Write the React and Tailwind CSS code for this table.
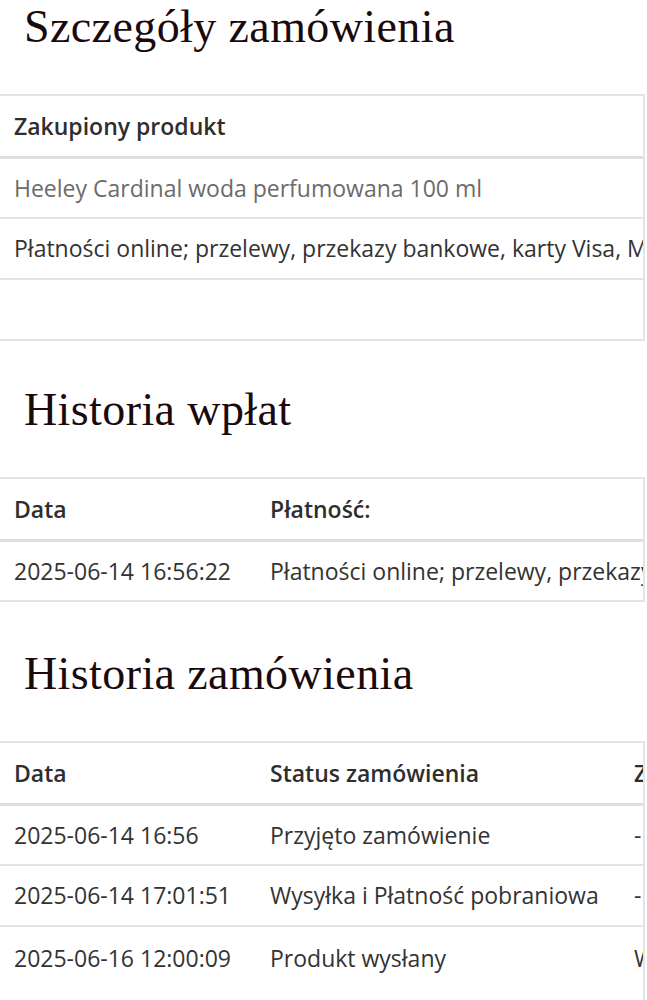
import React from 'react';

const serif = { fontFamily: '"Liberation Serif", "DejaVu Serif", serif' };

const Heading = ({ children, className = '' }) => (
  <h2
    className={`pl-[24px] text-[46px] leading-none text-[#1b0a0c] tracking-[0.4px] ${className}`}
    style={serif}
  >
    {children}
  </h2>
);

const Table = ({ head, rows, cols, width, lastTall = false }) => (
  <div className="w-[645px] overflow-hidden border-t-2 border-r-2 border-[#e4e4e4]">
    <table className="table-fixed border-collapse whitespace-nowrap" style={{ width }}>
      <colgroup>
        {cols.map((w, i) => (
          <col key={i} style={{ width: w }} />
        ))}
      </colgroup>
      <thead>
        <tr className="h-[61px] border-b-[3px] border-[#dedede]">
          {head.map((h, i) => (
            <th key={i} className="px-[14px] text-left align-middle font-semibold text-[#2e2e2e]">
              {h}
            </th>
          ))}
        </tr>
      </thead>
      <tbody>
        {rows.map((r, ri) => {
          const last = ri === rows.length - 1;
          return (
            <tr
              key={ri}
              className={
                last && lastTall
                  ? 'h-[90px]'
                  : 'h-[61px] border-b-2 border-[#e4e4e4]'
              }
            >
              {r.map((c, ci) => (
                <td
                  key={ci}
                  className={`overflow-hidden px-[14px] text-left ${last && lastTall ? 'align-top pt-[14px]' : 'align-middle'} ${
                    c.muted ? 'text-[#6b6b6b]' : 'text-[#333]'
                  }`}
                >
                  {c.text ?? c}
                </td>
              ))}
            </tr>
          );
        })}
      </tbody>
    </table>
  </div>
);

export default function App() {
  return (
    <div
      className="w-[647px] bg-white text-[23px] pb-10"
      style={{ fontFamily: '"Open Sans", "Noto Sans", sans-serif' }}
    >
      <Heading className="pt-[4px]">Szczegóły zamówienia</Heading>
      <div className="mt-[44px]">
        <Table
          cols={['900px']}
          width="900px"
          head={['Zakupiony produkt']}
          rows={[
            [{ text: 'Heeley Cardinal woda perfumowana 100 ml', muted: true }],
            ['Płatności online; przelewy, przekazy bankowe, karty Visa, Mastercard, BLIK'],
            [''],
          ]}
        />
      </div>

      <Heading className="mt-[46px]">Historia wpłat</Heading>
      <div className="mt-[44px]">
        <Table
          cols={['256px', '700px']}
          width="956px"
          head={['Data', 'Płatność:']}
          rows={[
            ['2025-06-14 16:56:22', 'Płatności online; przelewy, przekazy bankowe, karty Visa, Mastercard'],
          ]}
        />
      </div>

      <Heading className="mt-[49px]">Historia zamówienia</Heading>
      <div className="mt-[44px]">
        <Table
          cols={['256px', '364px', '300px']}
          width="920px"
          head={['Data', 'Status zamówienia', 'Zmiany']}
          lastTall
          rows={[
            ['2025-06-14 16:56', 'Przyjęto zamówienie', '-'],
            ['2025-06-14 17:01:51', 'Wysyłka i Płatność pobraniowa', '-'],
            ['2025-06-16 12:00:09', 'Produkt wysłany', 'Wysłano przesyłkę'],
          ]}
        />
      </div>
    </div>
  );
}
